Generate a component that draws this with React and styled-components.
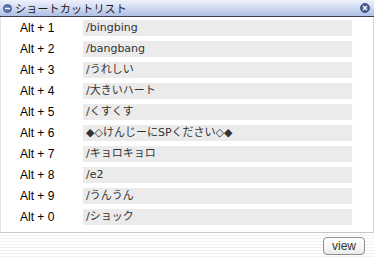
import React from "react";
import styled, { createGlobalStyle } from "styled-components";

const GlobalStyle = createGlobalStyle`
  html, body {
    margin: 0;
    padding: 0;
    background: #ffffff;
  }
`;

const Window = styled.div`
  width: 374px;
  height: 259px;
  box-sizing: border-box;
  display: flex;
  flex-direction: column;
  background: #ffffff;
  font-family: "Liberation Sans", "Noto Sans CJK JP", sans-serif;
  overflow: hidden;
`;

const TitleBar = styled.div`
  height: 16px;
  flex-shrink: 0;
  display: flex;
  align-items: center;
  padding: 0 4px 0 3px;
  background: linear-gradient(#eef2fb 0%, #d3ddf2 45%, #aebfe4 100%);
  border-bottom: 1px solid #3a4050;
  gap: 3px;
`;

const TitleText = styled.span`
  flex: 1;
  font-family: "Noto Sans CJK JP", sans-serif;
  font-size: 11px;
  line-height: 16px;
  color: #1a1a1a;
  letter-spacing: 0.2px;
`;

const List = styled.div`
  flex: 1;
  display: flex;
  flex-direction: column;
  gap: 5px;
  padding: 3px 21px 0 19px;
  border-left: 1px solid #e4e4e4;
  border-right: 1px solid #d6d6d6;
`;

const Row = styled.div`
  display: flex;
  align-items: center;
  height: 16px;
`;

const Key = styled.span`
  width: 63px;
  font-family: "Liberation Sans", sans-serif;
  font-size: 12px;
  color: #000;
`;

const Value = styled.span`
  flex: 1;
  height: 16px;
  line-height: 16px;
  background: #ebebeb;
  padding-left: 3px;
  font-family: "DejaVu Sans", "Noto Sans CJK JP", sans-serif;
  font-size: 11px;
  color: #333;
  white-space: nowrap;
  overflow: hidden;
`;

const Footer = styled.div`
  height: 26px;
  flex-shrink: 0;
  display: flex;
  align-items: center;
  justify-content: flex-end;
  padding-right: 9px;
  border-top: 1px solid #c8c8c8;
  background: repeating-linear-gradient(#ffffff 0px, #ffffff 2px, #f1f1f1 2px, #f1f1f1 3px);
`;

const Button = styled.button`
  width: 42px;
  height: 18px;
  padding: 0;
  border: 1px solid #8c8c8c;
  border-radius: 4px;
  background: linear-gradient(#ffffff, #ececec);
  font-family: "Liberation Sans", sans-serif;
  font-size: 12px;
  color: #333;
`;

function MinIcon() {
  return (
    <svg width="9" height="9" viewBox="0 0 9 9">
      <circle cx="4.5" cy="4.5" r="4" fill="#5e76b0" stroke="#3b4f86" strokeWidth="0.8" />
      <rect x="2" y="3.8" width="5" height="1.4" fill="#ffffff" />
    </svg>
  );
}

function CloseIcon() {
  return (
    <svg width="10" height="10" viewBox="0 0 10 10">
      <circle cx="5" cy="5" r="4.5" fill="#4a5f98" stroke="#2f3f6e" strokeWidth="0.8" />
      <path d="M3 3 L7 7 M7 3 L3 7" stroke="#ffffff" strokeWidth="1.3" />
    </svg>
  );
}

const shortcuts = [
  ["1", "/bingbing"],
  ["2", "/bangbang"],
  ["3", "/うれしい"],
  ["4", "/大きいハート"],
  ["5", "/くすくす"],
  ["6", "◆◇けんじーにSPください◇◆"],
  ["7", "/キョロキョロ"],
  ["8", "/e2"],
  ["9", "/うんうん"],
  ["0", "/ショック"],
];

export default function App() {
  return (
    <>
      <GlobalStyle />
      <Window>
        <TitleBar>
          <MinIcon />
          <TitleText>ショートカットリスト</TitleText>
          <CloseIcon />
        </TitleBar>
        <List>
          {shortcuts.map(([k, v]) => (
            <Row key={k}>
              <Key>Alt + {k}</Key>
              <Value>{v}</Value>
            </Row>
          ))}
        </List>
        <Footer>
          <Button>view</Button>
        </Footer>
      </Window>
    </>
  );
}
